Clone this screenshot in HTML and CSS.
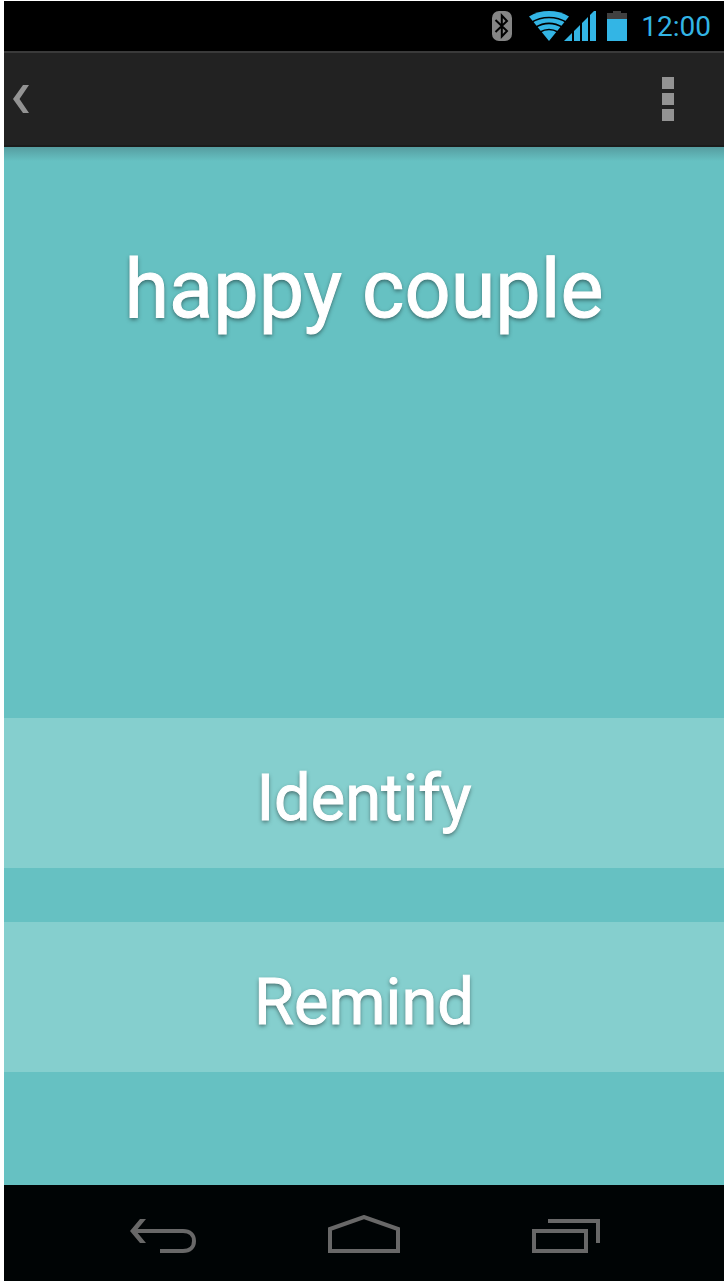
FILE: index.html
```html
<!DOCTYPE html>
<html lang="en">
<head>
<meta charset="utf-8">
<meta name="viewport" content="width=device-width, initial-scale=1">
<title>happy couple</title>
<link rel="stylesheet" href="styles.css">
</head>
<body>
<div class="phone">
  <div class="status-bar">
    <svg class="bluetooth" width="20" height="30" viewBox="0 0 20 30" role="img" aria-label="Bluetooth">
      <rect width="20" height="30" rx="7" fill="#858585"/>
      <path d="M3.500 9L15 20L9.800 25.500V4.500L15 10L3.500 21" fill="none" stroke="#000" stroke-width="2"/>
    </svg>
    <svg class="signal" width="67" height="30" viewBox="0 0 67 30" role="img" aria-label="Wi-Fi and mobile signal">
      <path d="M20 30L0 5.500C12 -1.800 28 -1.800 40 5.500Z" fill="#33b5e5"/>
      <path d="M2 11.500C13 4.800 27 4.800 38 11.500M6 16.500C15 11.200 25 11.200 34 16.500M11 21C17 17.700 23 17.700 29 21" fill="none" stroke="#000" stroke-width="1.600"/>
      <path d="M35 30L43 22V30ZM45 30V20L51 14V30ZM53 30V12L59 6V30ZM61 30V4L65 0H67V30Z" fill="#33b5e5"/>
    </svg>
    <svg class="battery" width="20" height="30" viewBox="0 0 20 30" role="img" aria-label="Battery">
      <path d="M0 2H6V0H14V2H20V8H0Z" fill="#404040"/>
      <path d="M0 8H20V30H0Z" fill="#33b5e5"/>
    </svg>
    <time class="clock">12:00</time>
  </div>
  <header class="app-bar">
    <button class="icon-button" type="button" aria-label="Back">
      <svg width="16" height="28" viewBox="0 0 16 28"><path d="M10 0H16L6.500 14L16 28H10L0 14Z" fill="#939393"/></svg>
    </button>
    <button class="icon-button" type="button" aria-label="More options">
      <svg width="12" height="44" viewBox="0 0 12 44"><path d="M0 0H12V12H0ZM0 16H12V28H0ZM0 32H12V44H0Z" fill="#939393"/></svg>
    </button>
  </header>
  <main class="content">
    <h1 class="title">happy couple</h1>
    <div class="actions">
      <button class="action" type="button">Identify</button>
      <button class="action" type="button">Remind</button>
    </div>
  </main>
  <nav class="nav-bar" aria-label="System">
    <button class="icon-button" type="button" aria-label="Back">
      <svg width="66" height="34" viewBox="0 0 66 34" fill="none" stroke="#686868" stroke-width="4"><path d="M5 12H53C60 12 64 16 64 22S60 32 53 32H30"/><path d="M10 0H16L6 12L16 24H10L0 12Z" fill="#686868" stroke="none"/></svg>
    </button>
    <button class="icon-button" type="button" aria-label="Home">
      <svg width="72" height="38" viewBox="0 0 72 38" fill="none" stroke="#686868" stroke-width="4"><path d="M2 36V14L36 2L70 14V36Z"/></svg>
    </button>
    <button class="icon-button" type="button" aria-label="Recent apps">
      <svg width="68" height="34" viewBox="0 0 68 34" fill="none" stroke="#686868" stroke-width="4"><path d="M2 12H54V32H2ZM16 2H66V24"/></svg>
    </button>
  </nav>
</div>
</body>
</html>
```
FILE: styles.css
```css
* {
  box-sizing: border-box;
}

body {
  margin: 0;
  background: #fff;
  font-family: Roboto, "Liberation Sans", sans-serif;
}

.phone {
  display: flex;
  flex-direction: column;
  min-height: 100vh;
  padding: 1px 4px 0;
}

.status-bar {
  display: flex;
  align-items: center;
  justify-content: flex-end;
  height: 50px;
  padding-right: 13px;
  background: #000;
}

.signal {
  margin-left: 17px;
}

.battery {
  margin-left: 11px;
}

.clock {
  margin-left: 14px;
  padding-top: 2px;
  color: #33b5e5;
  font-size: 28px;
  line-height: 40px;
}

.app-bar {
  display: flex;
  align-items: center;
  justify-content: space-between;
  height: 96px;
  padding: 0 50px 0 9px;
  border-top: 2px solid #3a3a3a;
  border-bottom: 2px solid #1b1b1b;
  background: #222;
}

.icon-button {
  display: flex;
  padding: 0;
  border: 0;
  background: none;
  cursor: pointer;
}

.content {
  display: flex;
  flex: 1;
  flex-direction: column;
  justify-content: space-between;
  padding: 95px 0 113px;
  background: linear-gradient(#569da0, #66c1c2 14px);
}

.title,
.action {
  color: #fff;
  font-weight: 400;
  text-shadow: 0 2px 4px rgba(0, 0, 0, 0.5);
  -webkit-text-stroke: 1px #fff;
}

.title {
  margin: 0;
  font-size: 81px;
  line-height: 96px;
  text-align: center;
}

.actions {
  display: grid;
  gap: 54px;
}

.action {
  height: 150px;
  padding: 9px 0 0;
  border: 0;
  background: #85cfce;
  font-family: inherit;
  font-size: 65px;
  line-height: 76px;
  cursor: pointer;
}

.nav-bar {
  display: flex;
  align-items: flex-end;
  justify-content: space-between;
  height: 96px;
  padding: 0 124px 28px 126px;
  background: #000405;
}
```
